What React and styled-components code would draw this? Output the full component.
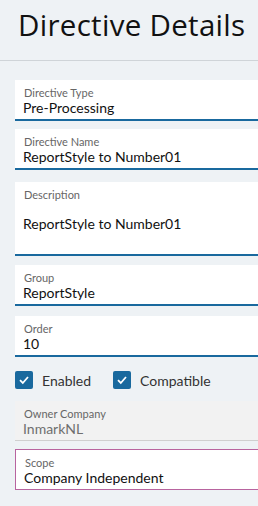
import styled, { createGlobalStyle } from "styled-components";

const GlobalStyle = createGlobalStyle`
  body {
    margin: 0;
    background: #eef2f5;
    font-family: "Lato", "Liberation Sans", sans-serif;
    overflow: hidden;
  }
`;

const Page = styled.div`
  width: 258px;
  height: 506px;
  overflow: hidden;
  background: #eef2f5;
`;

const Header = styled.div`
  height: 61px;
  border-bottom: 1px solid #cfd4d8;
  padding-left: 18px;
  box-sizing: border-box;
`;

const Title = styled.h1`
  margin: 0;
  padding-top: 4px;
  font-family: "Open Sans", "Noto Sans", sans-serif;
  font-weight: 400;
  font-size: 29.5px;
  letter-spacing: 0.3px;
  color: #111;
`;

const Form = styled.div`
  padding: 19px 0 0 15px;
  width: 300px;
`;

const Field = styled.div`
  box-sizing: border-box;
  height: ${(p) => p.height || 41}px;
  margin-bottom: ${(p) => p.gap ?? 9}px;
  padding: 6px 9px 0;
  background: ${(p) => (p.readOnly ? "#f2f2f2" : "#fff")};
  border: ${(p) => (p.outlined ? "1px solid #b8649f" : "none")};
  border-bottom: ${(p) =>
    p.outlined
      ? "1px solid #b8649f"
      : p.readOnly
      ? "1px solid #cfcfcf"
      : "2px solid #19699e"};
`;

const Label = styled.div`
  font-size: 11px;
  line-height: 13px;
  color: #666;
`;

const Value = styled.div`
  font-size: 14px;
  line-height: 17px;
  color: ${(p) => (p.muted ? "#6f6f6f" : "#111")};
  margin-top: ${(p) => p.offset || 0}px;
  margin-left: -1px;
`;

const Checks = styled.div`
  display: flex;
  align-items: center;
  gap: 22px;
  height: 18px;
  margin: 14px 0 12px;
`;

const Check = styled.label`
  display: flex;
  align-items: center;
  gap: 9px;
  font-size: 14px;
  color: #333;
`;

const Box = styled.span`
  width: 18px;
  height: 18px;
  border-radius: 2px;
  background: #19699e;
  display: flex;
  align-items: center;
  justify-content: center;
`;

function Checkbox({ label }) {
  return (
    <Check>
      <Box>
        <svg width="12" height="12" viewBox="0 0 12 12">
          <path d="M2 6.2 L4.8 9 L10 3" fill="none" stroke="#fff" strokeWidth="1.8" />
        </svg>
      </Box>
      {label}
    </Check>
  );
}

export default function App() {
  return (
    <Page>
      <GlobalStyle />
      <Header>
        <Title>Directive Details</Title>
      </Header>
      <Form>
        <Field gap={8}>
          <Label>Directive Type</Label>
          <Value>Pre-Processing</Value>
        </Field>
        <Field gap={12}>
          <Label>Directive Name</Label>
          <Value>ReportStyle to Number01</Value>
        </Field>
        <Field height={74} gap={9}>
          <Label>Description</Label>
          <Value offset={14}>ReportStyle to Number01</Value>
        </Field>
        <Field gap={10}>
          <Label>Group</Label>
          <Value>ReportStyle</Value>
        </Field>
        <Field gap={0}>
          <Label>Order</Label>
          <Value>10</Value>
        </Field>
        <Checks>
          <Checkbox label="Enabled" />
          <Checkbox label="Compatible" />
        </Checks>
        <Field readOnly gap={8} height={40}>
          <Label>Owner Company</Label>
          <Value muted>InmarkNL</Value>
        </Field>
        <Field outlined>
          <Label>Scope</Label>
          <Value>Company Independent</Value>
        </Field>
      </Form>
    </Page>
  );
}
